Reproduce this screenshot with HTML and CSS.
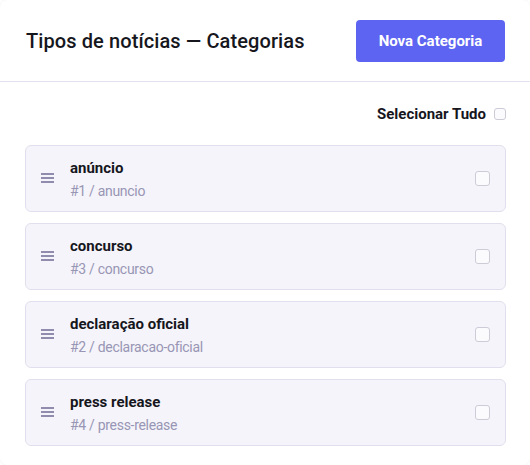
FILE: index.html
```html
<!DOCTYPE html>
<html lang="pt">
<head>
<meta charset="utf-8">
<link rel="stylesheet" href="styles.css">
</head>
<body>
<div class="card">
  <header class="card-header">
    <h1 class="title">Tipos de notícias — Categorias</h1>
    <button class="btn-primary">Nova Categoria</button>
  </header>
  <div class="card-body">
    <label class="select-all">
      <span>Selecionar Tudo</span>
      <span class="checkbox small"></span>
    </label>
    <ul class="list">
      <li class="item">
        <svg class="handle" width="13" height="10" viewBox="0 0 13 10"><rect x="0" y="0" width="13" height="2" /><rect x="0" y="4" width="13" height="2" /><rect x="0" y="8" width="13" height="2" /></svg>
        <div class="item-text"><div class="item-title">anúncio</div><div class="item-sub">#1 / anuncio</div></div>
        <span class="checkbox"></span>
      </li>
      <li class="item">
        <svg class="handle" width="13" height="10" viewBox="0 0 13 10"><rect x="0" y="0" width="13" height="2" /><rect x="0" y="4" width="13" height="2" /><rect x="0" y="8" width="13" height="2" /></svg>
        <div class="item-text"><div class="item-title">concurso</div><div class="item-sub">#3 / concurso</div></div>
        <span class="checkbox"></span>
      </li>
      <li class="item">
        <svg class="handle" width="13" height="10" viewBox="0 0 13 10"><rect x="0" y="0" width="13" height="2" /><rect x="0" y="4" width="13" height="2" /><rect x="0" y="8" width="13" height="2" /></svg>
        <div class="item-text"><div class="item-title">declaração oficial</div><div class="item-sub">#2 / declaracao-oficial</div></div>
        <span class="checkbox"></span>
      </li>
      <li class="item">
        <svg class="handle" width="13" height="10" viewBox="0 0 13 10"><rect x="0" y="0" width="13" height="2" /><rect x="0" y="4" width="13" height="2" /><rect x="0" y="8" width="13" height="2" /></svg>
        <div class="item-text"><div class="item-title">press release</div><div class="item-sub">#4 / press-release</div></div>
        <span class="checkbox"></span>
      </li>
    </ul>
  </div>
</div>
</body>
</html>
```

FILE: styles.css
```css
* { box-sizing: border-box; }
html, body { margin: 0; padding: 0; background: #fff; }
body { font-family: Roboto, "Liberation Sans", sans-serif; color: #16161d; }

.card {
  width: 530px;
  height: 465px;
  background: #fff;
  border-radius: 8px;
  box-shadow: 0 0 3px rgba(60, 60, 100, 0.08);
  overflow: hidden;
}

.card-header {
  height: 82px;
  display: flex;
  align-items: center;
  justify-content: space-between;
  padding: 0 25px 0 26px;
  border-bottom: 1px solid #e3e1ef;
}

.title {
  margin: 0;
  font-size: 20px;
  font-weight: 500;
  color: #16161d;
  letter-spacing: 0.1px;
}

.btn-primary {
  width: 149px;
  height: 42px;
  border: none;
  border-radius: 4px;
  background: #5d64f1;
  color: #fff;
  font-family: inherit;
  font-size: 15px;
  font-weight: 700;
  margin-top: 1px;
}

.card-body {
  padding: 21px 24px 0 25px;
}

.select-all {
  display: flex;
  justify-content: flex-end;
  align-items: center;
  gap: 8px;
  font-size: 15px;
  font-weight: 700;
  color: #16161d;
  height: 22px;
}

.list {
  list-style: none;
  margin: 20px 0 0;
  padding: 0;
  display: flex;
  flex-direction: column;
  gap: 11px;
}

.item {
  display: flex;
  align-items: center;
  height: 67px;
  padding: 0 15px;
  background: #f5f4fa;
  border: 1px solid #e1dfee;
  border-radius: 6px;
}

.handle {
  fill: #8f8cad;
  flex: none;
  margin-right: 16px;
  margin-top: -1px;
}

.item-text { flex: 1; }

.item-title {
  font-size: 15px;
  font-weight: 700;
  line-height: 20px;
  color: #16161d;
  margin-top: 1px;
}

.item-sub {
  font-size: 14px;
  letter-spacing: -0.3px;
  line-height: 20px;
  margin-top: 3px;
  color: #9896b4;
}

.checkbox {
  width: 15px;
  height: 15px;
  border: 1px solid #cdcbd8;
  border-radius: 3px;
  background: #fbfbfd;
  flex: none;
}

.checkbox.small {
  width: 12px;
  height: 12px;
}
```
